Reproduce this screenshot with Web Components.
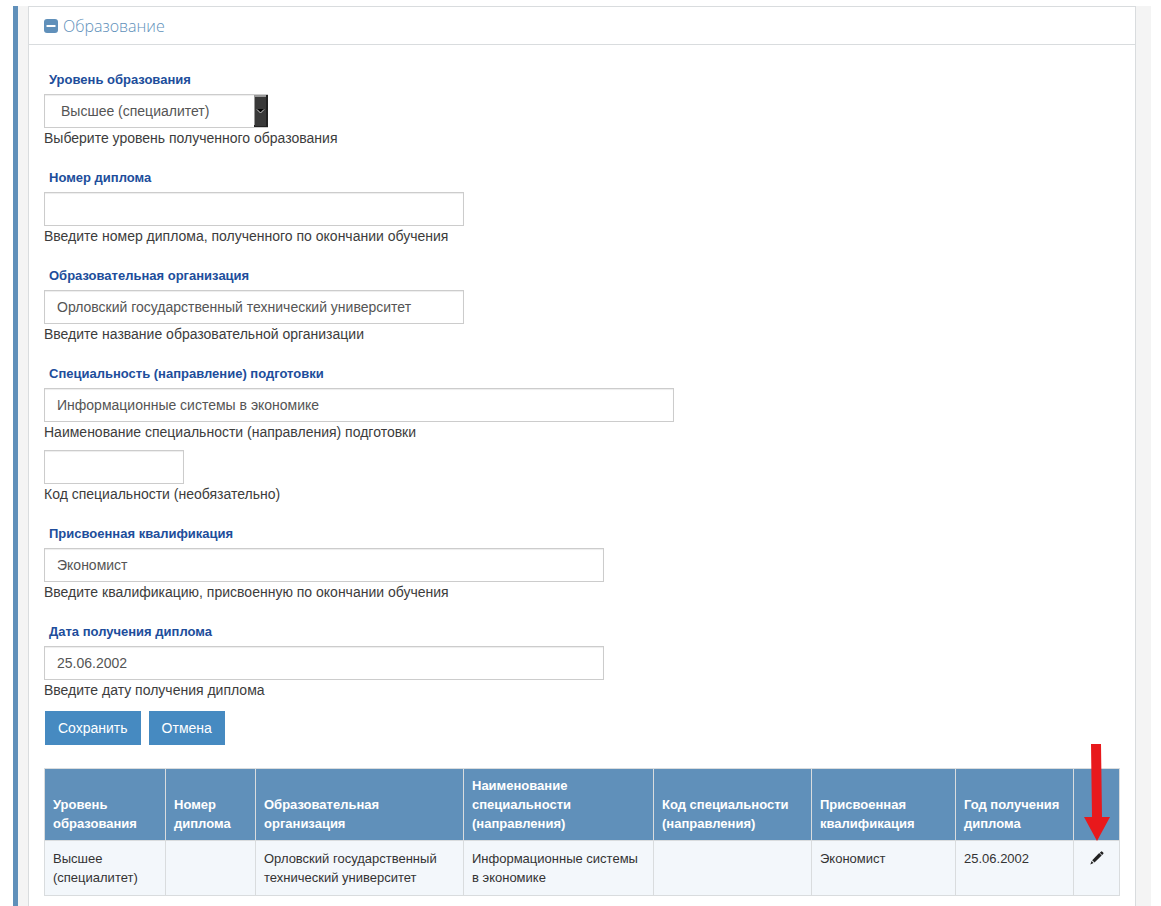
<!DOCTYPE html>
<html lang="ru">
<head>
<meta charset="utf-8">
<meta name="viewport" content="width=device-width, initial-scale=1">
<title>Образование</title>
<style>
    body{
        margin: 6px 10px 0 13px;
        background: #fff;
        color: #3c3c3c;
        font: 14px/20px "Liberation Sans", Arial, sans-serif;
        --accent: #6090ba;
        --line: #d9dcde;
    }
    .code{
        margin-top: -12px;
    }
</style>
</head>
<body>
<page-frame>
    <fold-panel heading="Образование">
        <form-stack>
            <select-field label="Уровень образования" value="Высшее (специалитет)">Выберите уровень полученного образования</select-field>
            <text-field label="Номер диплома" size="m">Введите номер диплома, полученного по окончании обучения</text-field>
            <text-field label="Образовательная организация" size="m" value="Орловский государственный технический университет">Введите название образовательной организации</text-field>
            <text-field label="Специальность (направление) подготовки" size="xl" value="Информационные системы в экономике">Наименование специальности (направления) подготовки</text-field>
            <text-field class="code" size="s">Код специальности (необязательно)</text-field>
            <text-field label="Присвоенная квалификация" size="l" value="Экономист">Введите квалификацию, присвоенную по окончании обучения</text-field>
            <text-field label="Дата получения диплома" size="l" value="25.06.2002">Введите дату получения диплома</text-field>
        </form-stack>
        <button-row>
            <action-button>Сохранить</action-button>
            <action-button>Отмена</action-button>
        </button-row>
        <education-table></education-table>
    </fold-panel>
</page-frame>

<script>
const _frame_template = /* html */`
    <style>
        :host{
            box-sizing: border-box;
            min-height: calc(100vh - 6px);
            padding: 0 15px 0 10px;
            border-left: 5px solid var(--accent);
            background: #f4f4f4;
            display: grid;
            grid-template-columns: minmax(0, 1fr);
        }
    </style>
    <slot></slot>
`

const _panel_template = /* html */`
    <style>
        :host{
            display: block;
            border: 1px solid var(--line);
            border-bottom: 0;
            background: #fff;
        }
        header{
            display: flex;
            align-items: center;
            gap: 5px;
            height: 37px;
            padding: 0 15px;
            border-bottom: 1px solid var(--line);
        }
        button{
            display: flex;
            padding: 0;
            border: 0;
            background: none;
            cursor: pointer;
        }
        h2{
            margin: 0;
            color: var(--accent);
            font: 300 16px/24px "Open Sans", sans-serif;
        }
        .body{
            padding: 25px 15px 9px;
        }
        .body[hidden]{
            display: none;
        }
    </style>
    <header>
        <button type="button" aria-label="Свернуть" aria-expanded="true">
            <svg width="14" height="14" viewBox="0 0 14 14">
                <rect width="14" height="14" rx="3" fill="#6090ba"/>
                <rect x="2.500" y="6" width="9" height="2" rx=".5" fill="#fff"/>
            </svg>
        </button>
        <h2></h2>
    </header>
    <div class="body"><slot></slot></div>
`

const _stack_template = /* html */`
    <style>
        :host{
            display: flex;
            flex-direction: column;
            gap: 20px;
        }
    </style>
    <slot></slot>
`

const _field_style = /* html */`
    <style>
        :host{
            display: block;
        }
        label{
            display: block;
            margin-bottom: 4px;
            padding-left: 5px;
            color: #204d9b;
            font-size: 13px;
            font-weight: bold;
        }
        input, select{
            display: block;
            box-sizing: border-box;
            width: 100%;
            height: 34px;
            margin: 0;
            padding: 6px 12px;
            border: 1px solid #ccc;
            border-radius: 0;
            background: #fff;
            box-shadow: inset 0 1px 1px rgba(0, 0, 0, .075);
            color: #555;
            font: inherit;
            appearance: none;
        }
        .box{
            max-width: 420px;
        }
        :host([size="s"]) .box{ max-width: 140px; }
        :host([size="l"]) .box{ max-width: 560px; }
        :host([size="xl"]) .box{ max-width: 630px; }
    </style>
`

const _text_template = _field_style + /* html */`
    <label for="control"></label>
    <div class="box"><input id="control" type="text" aria-describedby="help"></div>
    <div id="help"><slot></slot></div>
`

const _select_template = _field_style + /* html */`
    <style>
        .box{
            position: relative;
            max-width: 224px;
        }
        select{
            padding-left: 16px;
        }
        svg{
            position: absolute;
            top: 1px;
            right: 0;
            pointer-events: none;
        }
    </style>
    <label for="control"></label>
    <div class="box">
        <select id="control" aria-describedby="help"><option></option></select>
        <svg width="14" height="32" viewBox="0 0 14 32">
            <rect width="14" height="32" fill="#222"/>
            <rect width="12" height="30" fill="#999"/>
            <rect x="1" y="2" width="11" height="29" fill="#393939"/>
            <path d="M3 14h7l-3.500 4z" fill="#050505"/>
            <path d="M3 14.500l3.500 3.500 3.500-3.500" fill="none" stroke="#ccc"/>
        </svg>
    </div>
    <div id="help"><slot></slot></div>
`

const _row_template = /* html */`
    <style>
        :host{
            display: flex;
            gap: 8px;
            padding: 11px 1px 23px;
        }
    </style>
    <slot></slot>
`

const _button_template = /* html */`
    <style>
        :host{
            display: block;
        }
        button{
            height: 34px;
            padding: 0 13px;
            border: 0;
            background: #468ac1;
            color: #fff;
            font: inherit;
            cursor: pointer;
        }
    </style>
    <button type="button"><slot></slot></button>
`

const _table_template = /* html */`
    <style>
        :host{
            display: block;
        }
        table{
            width: 100%;
            border-collapse: collapse;
            table-layout: fixed;
            color: #333;
            font-size: 13px;
            line-height: 19px;
        }
        th, td{
            border: 1px solid var(--line);
            text-align: left;
        }
        th{
            padding: 7px 8px;
            background: var(--accent);
            color: #fff;
            vertical-align: bottom;
        }
        td{
            height: 38px;
            padding: 8px;
            background: #f3f7fb;
            vertical-align: top;
        }
        .mark{
            position: relative;
        }
        .mark svg{
            position: absolute;
            top: -25px;
            left: 10px;
            pointer-events: none;
        }
        .edit button{
            display: flex;
            margin: 2px auto;
            padding: 0;
            border: 0;
            background: none;
            cursor: pointer;
        }
    </style>
    <table>
        <colgroup></colgroup>
        <thead><tr></tr></thead>
        <tbody><tr></tr></tbody>
    </table>
`

const _arrow = /* html */`
    <svg width="26" height="97" viewBox="0 0 26 97">
        <path d="M7 0h10l1 73h8l-13 24-13-24h8z" fill="#e8191c"/>
    </svg>
`

const _pencil = /* html */`
    <button type="button" aria-label="Редактировать">
        <svg width="14" height="14" viewBox="0 0 14 14" fill="#222">
            <path d="M10.900 .7a1 1 0 0 1 1.400 0l.9.9a1 1 0 0 1 0 1.400l-1.100 1-2.300-2.300z"/>
            <path d="M9.200 2.100l2.500 2.500-7.200 6.900-2.300-2.300z"/>
            <path d="M1.600 10.100l1.900 1.900-3.200 1.500z"/>
        </svg>
    </button>
`

const columns = [
    { width: 121, head: "Уровень образования", cell: "Высшее (специалитет)" },
    { width: 90, head: "Номер диплома", cell: "" },
    { width: 208, head: "Образовательная организация", cell: "Орловский государственный технический университет" },
    { width: 190, head: "Наименование специальности (направления)", cell: "Информационные системы в экономике" },
    { width: 158, head: "Код специальности (направления)", cell: "" },
    { width: 144, head: "Присвоенная квалификация", cell: "Экономист" },
    { width: 118, head: "Год получения диплома", cell: "25.06.2002" },
]

class BaseUI extends HTMLElement{
    constructor(template) {
        super();
        this.attachShadow({ mode: "open" }).innerHTML = template;
    }
    find(selector) {
        return this.shadowRoot.querySelector(selector);
    }
}

class PageFrame extends BaseUI{
    constructor() { super(_frame_template); }
}

class FoldPanel extends BaseUI{
    constructor() {
        super(_panel_template);
        const button = this.find("button");
        button.addEventListener("click", () => {
            const body = this.find(".body");
            body.hidden = !body.hidden;
            button.setAttribute("aria-expanded", String(!body.hidden));
        });
    }
    connectedCallback() {
        this.find("h2").textContent = this.getAttribute("heading");
    }
}

class FormStack extends BaseUI{
    constructor() { super(_stack_template); }
}

class TextField extends BaseUI{
    constructor() { super(_text_template); }
    connectedCallback() {
        const label = this.find("label");
        const input = this.find("input");
        input.value = this.getAttribute("value") || "";
        if (this.hasAttribute("label")) {
            label.textContent = this.getAttribute("label");
        } else {
            // no caption of its own: the help line names the input
            label.remove();
            input.setAttribute("aria-labelledby", "help");
        }
    }
}

class SelectField extends BaseUI{
    constructor() { super(_select_template); }
    connectedCallback() {
        this.find("label").textContent = this.getAttribute("label");
        this.find("option").textContent = this.getAttribute("value");
    }
}

class ButtonRow extends BaseUI{
    constructor() { super(_row_template); }
}

class ActionButton extends BaseUI{
    constructor() { super(_button_template); }
}

class EducationTable extends BaseUI{
    constructor() { super(_table_template); }
    connectedCallback() {
        this.find("colgroup").innerHTML = columns.map(c => `<col style="width: ${c.width}px">`).join("") + `<col style="width: 46px">`;
        this.find("thead tr").innerHTML = columns.map(c => `<th scope="col">${c.head}</th>`).join("") + `<th class="mark">${_arrow}</th>`;
        this.find("tbody tr").innerHTML = columns.map(c => `<td>${c.cell}</td>`).join("") + `<td class="edit">${_pencil}</td>`;
    }
}

customElements.define("page-frame", PageFrame);
customElements.define("fold-panel", FoldPanel);
customElements.define("form-stack", FormStack);
customElements.define("text-field", TextField);
customElements.define("select-field", SelectField);
customElements.define("button-row", ButtonRow);
customElements.define("action-button", ActionButton);
customElements.define("education-table", EducationTable);
</script>
</body>
</html>
